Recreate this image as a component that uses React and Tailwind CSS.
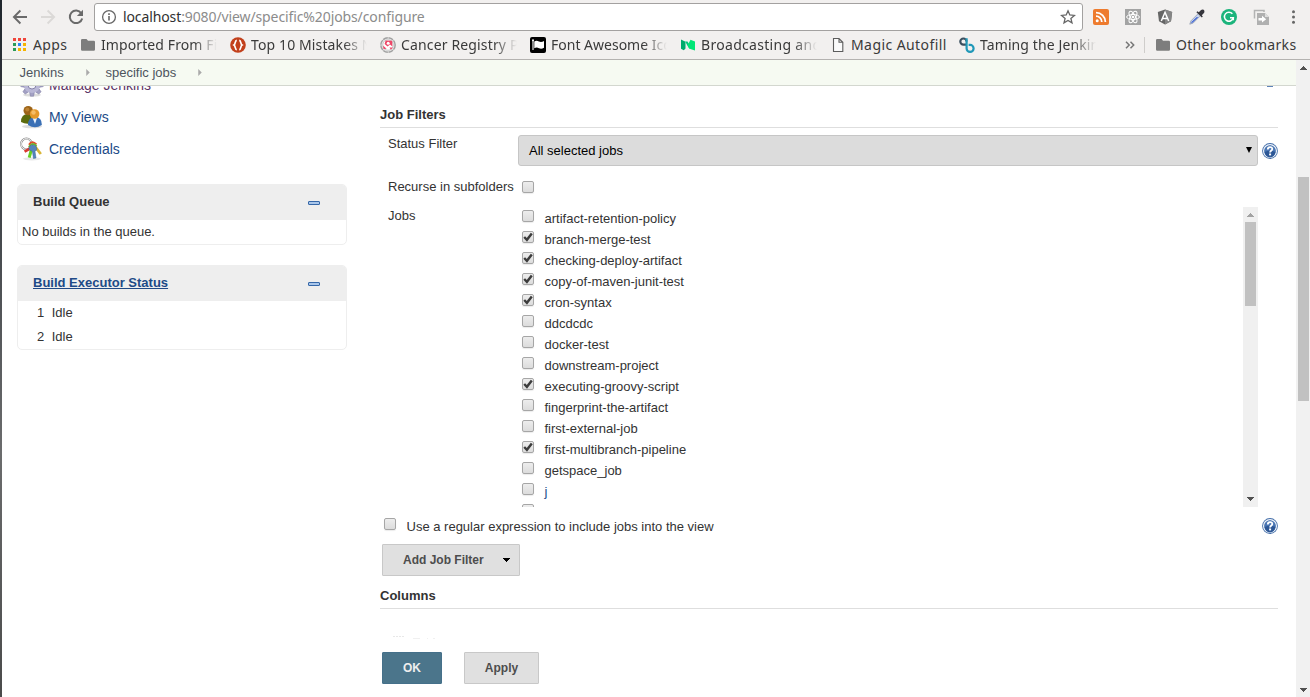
import React from "react";

const jobs = [
  ["artifact-retention-policy", false],
  ["branch-merge-test", true],
  ["checking-deploy-artifact", true],
  ["copy-of-maven-junit-test", true],
  ["cron-syntax", true],
  ["ddcdcdc", false],
  ["docker-test", false],
  ["downstream-project", false],
  ["executing-groovy-script", true],
  ["fingerprint-the-artifact", false],
  ["first-external-job", false],
  ["first-multibranch-pipeline", true],
  ["getspace_job", false],
  ["j", false],
  ["", false],
];

function Checkbox({ checked }) {
  return (
    <span className="block h-3 w-3 shrink-0 rounded-[2px] border border-[#a6a6a6] bg-linear-to-b from-[#ededed] to-[#dcdcdc] shadow-[0_1px_1px_rgba(0,0,0,0.08)]">
      {checked && (
        <svg viewBox="0 0 10 10" className="block h-[10px] w-[10px]">
          <path d="M1.2 5 L3.9 7.8 L8.8 1.4" fill="none" stroke="#3c3c3c" strokeWidth="2.4" />
        </svg>
      )}
    </span>
  );
}

function HelpIcon() {
  return (
    <svg viewBox="0 0 16 16" className="block h-4 w-4 shrink-0">
      <circle cx="8" cy="8" r="7.9" fill="#456fa9" />
      <circle cx="8" cy="8" r="6.4" fill="none" stroke="#eef3fa" strokeWidth="1.3" />
      <circle cx="8" cy="8" r="5.5" fill="#4a76b4" />
      <path d="M2.6 9 A5.4 5.4 0 0 0 13.4 9 Q8 6.5 2.6 9Z" fill="#2c5796" />
      <path d="M5.8 6.4 C5.8 3.4 10.3 3.4 10.3 6 C10.3 7.6 8.1 7.4 8.1 9.6" fill="none" stroke="#fff" strokeWidth="1.8" />
      <rect x="7.1" y="10.5" width="2" height="1.9" fill="#fff" />
    </svg>
  );
}

function Arrow({ up, color = "#505050", className }) {
  return (
    <svg viewBox="0 0 7 4" className={"block h-1 w-[7px] " + (className || "")} shapeRendering="crispEdges">
      <path d={up ? "M3.5 0 L7 4 H0Z" : "M0 0 H7 L3.5 4Z"} fill={color} />
    </svg>
  );
}

function FolderIcon() {
  return (
    <svg viewBox="0 0 16 16" className="h-4 w-4">
      <path d="M2.2 2 H6.5 L8 3.8 H13.8 Q15 3.8 15 5 V12.6 Q15 13.8 13.8 13.8 H2.2 Q1 13.8 1 12.6 V3.2 Q1 2 2.2 2Z" fill="#7d7d7d" />
    </svg>
  );
}

function AppsIcon() {
  const c = ["#f0453a", "#f0453a", "#f0453a", "#2a9a57", "#2b83f6", "#f5b400", "#2a9a57", "#f5b400", "#f5b400"];
  return (
    <svg viewBox="0 0 16 16" className="h-4 w-4" shapeRendering="crispEdges">
      {c.map((f, i) => (
        <rect key={i} x={1 + (i % 3) * 5} y={1 + Math.floor(i / 3) * 5} width="3" height="3" fill={f} />
      ))}
    </svg>
  );
}

function BracesIcon() {
  return (
    <svg viewBox="0 0 16 16" className="h-4 w-4">
      <circle cx="8" cy="8" r="7.8" fill="#c2401c" />
      <path d="M6.8 3.4 C4.7 3.4 5.7 7 4 8 C5.7 9 4.7 12.6 6.8 12.6 M9.2 3.4 C11.3 3.4 10.3 7 12 8 C10.3 9 11.3 12.6 9.2 12.6" fill="none" stroke="#fff" strokeWidth="1.7" />
    </svg>
  );
}

function RegistryIcon() {
  return (
    <svg viewBox="0 0 16 16" className="h-4 w-4">
      <circle cx="8" cy="8" r="7.2" fill="#e2e2e2" stroke="#a0a0a0" strokeWidth="1.4" strokeDasharray="5 .7" />
      <circle cx="8" cy="8" r="5.2" fill="#fff" stroke="#c4c4c4" strokeWidth=".8" />
      <path d="M5.6 3.4 L12.2 3.8 L12.4 9.4 L10 7.6 L7.6 9.6 L4.6 7Z" fill="#ee4667" />
      <circle cx="8.2" cy="6.3" r="1.5" fill="#fff" />
      <path d="M3 8.4 L6.6 11.8 L3.6 12Z M9.4 10.6 L12.8 10.6 L11 12.8Z" fill="#ee4667" />
    </svg>
  );
}

function FlagIcon() {
  return (
    <svg viewBox="0 0 16 16" className="h-4 w-4">
      <rect width="16" height="16" rx="2" fill="#000" />
      <path d="M3 3.2 V13" stroke="#fff" strokeWidth="1.1" />
      <circle cx="3" cy="3.2" r="1" fill="#fff" />
      <path d="M4.3 4.5 Q6.5 3.2 9 4.5 Q11.3 5.5 14 4 V10.8 Q11.3 12.3 9 11.2 Q6.5 10 4.3 11.3Z" fill="#fff" />
    </svg>
  );
}

function RibbonIcon() {
  return (
    <svg viewBox="0 0 16 16" className="h-4 w-4">
      <path d="M1 2.5 L5.5 4.8 V11.5 L3.8 13.2 L1 11.8Z" fill="#00ab6c" />
      <path d="M5.2 4.6 L9.2 11.8 L11 10 L7.5 4.5Z" fill="#00c87a" />
      <path d="M10.5 2.8 L15 4.5 V13.5 L9.5 11.8 L7.6 8.2Z" fill="#00e676" />
    </svg>
  );
}

function PageIcon() {
  return (
    <svg viewBox="0 0 16 16" className="h-4 w-4">
      <path d="M3.5 1.5 H9 L12.8 5.3 V14.5 H3.5Z M9 1.5 V5.3 H12.8" fill="#fafafa" stroke="#5c5c5c" strokeWidth="1.1" />
    </svg>
  );
}

function LoopIcon() {
  return (
    <svg viewBox="0 0 16 16" className="h-4 w-4" fill="none" strokeWidth="2.2">
      <path d="M8 7.7 H4.4 A3.1 3.1 0 1 1 7.5 4.6" stroke="#3b4f5f" />
      <path d="M7.6 1.2 V11.4 A3.5 3.5 0 1 0 11.1 7.9 H9.6" stroke="#2098b8" />
    </svg>
  );
}

const bookmarks = [
  { text: "Apps", icon: AppsIcon, box: "w-[68px]", label: "tracking-[0.4px]" },
  { text: "Imported From Fire", icon: FolderIcon, box: "w-[150px]", fade: true, label: "tracking-[0.1px]" },
  { text: "Top 10 Mistakes No", icon: BracesIcon, box: "w-[150px]", fade: true, label: "tracking-[0.12px]" },
  { text: "Cancer Registry Pr", icon: RegistryIcon, box: "w-[150px]", fade: true, label: "tracking-[0.15px]" },
  { text: "Font Awesome Icon", icon: FlagIcon, box: "w-[150px]", fade: true, label: "" },
  { text: "Broadcasting and", icon: RibbonIcon, box: "w-[150px]", fade: true, label: "tracking-[0.3px]" },
  { text: "Magic Autofill", icon: PageIcon, box: "w-[129px]", label: "tracking-[0.42px]" },
  { text: "Taming the Jenkins", icon: LoopIcon, box: "w-[137px]", fade: true, label: "tracking-[0.1px]" },
];

function Bookmark({ item }) {
  const Icon = item.icon;
  return (
    <div className={"flex shrink-0 items-center gap-[5px] " + item.box}>
      <span className="shrink-0"><Icon /></span>
      <span
        className={
          "-mt-px block overflow-hidden whitespace-nowrap " + item.label +
          (item.fade ? " w-[116px] mask-r-from-80% mask-r-to-100%" : "")
        }
      >
        {item.text}
      </span>
    </div>
  );
}

function Extensions() {
  return (
    <div className="flex items-center gap-4">
      <svg viewBox="0 0 16 16" className="h-4 w-4">
        <rect width="16" height="16" rx="2" fill="#ee7b2e" />
        <circle cx="4.2" cy="11.8" r="1.5" fill="#fff" />
        <path d="M3 7.2 A5.8 5.8 0 0 1 8.8 13 M3 3.6 A9.4 9.4 0 0 1 12.4 13" fill="none" stroke="#fff" strokeWidth="1.8" />
      </svg>
      <svg viewBox="0 0 16 16" className="h-4 w-4">
        <rect width="16" height="16" fill="#a3a3a3" />
        <g fill="none" stroke="#fff" strokeWidth="1">
          <ellipse cx="8" cy="8" rx="6.4" ry="2.5" />
          <ellipse cx="8" cy="8" rx="6.4" ry="2.5" transform="rotate(60 8 8)" />
          <ellipse cx="8" cy="8" rx="6.4" ry="2.5" transform="rotate(120 8 8)" />
        </g>
        <circle cx="8" cy="8" r="1.3" fill="#fff" />
      </svg>
      <svg viewBox="0 0 16 16" className="h-4 w-4">
        <path d="M8 .6 L15.2 3 L14 12.2 L8 15.6 L2 12.2 L.8 3Z" fill="#666" />
        <path d="M8 .6 L15.2 3 L14 12.2 L8 15.6Z" fill="#858585" />
        <path d="M4.3 12 L8 3.3 L11.7 12 M5.7 9.4 H10.3" fill="none" stroke="#fff" strokeWidth="1.5" />
      </svg>
      <svg viewBox="0 0 16 16" className="h-4 w-4">
        <path d="M9.4 4.4 L2 11.8 L.8 15.2 L4.2 14 L11.6 6.6Z" fill="#c9d5ee" stroke="#8490a8" strokeWidth=".7" />
        <path d="M7.5 8.2 L2.6 13 L2 14.2 L3.6 13.6 L9.4 8Z" fill="#3359d0" />
        <path d="M7.4 3.2 L12.8 8.6 L13.8 7.4 L12.8 6.2 L15.2 3.8 Q16 1.9 14.7 .8 Q13.2 0 11.8 1.2 L9.8 3.2 L8.5 2.2Z" fill="#37363d" />
      </svg>
      <svg viewBox="0 0 16 16" className="h-4 w-4">
        <circle cx="8" cy="8" r="8" fill="#1cb47c" />
        <path d="M11.4 4.8 A4.5 4.5 0 1 0 12.3 8.8 H9 M12.3 8.3 V11.2" fill="none" stroke="#fff" strokeWidth="1.5" />
      </svg>
      <svg viewBox="0 0 16 16" className="h-4 w-4">
        <path d="M1.5 9.5 V1.5 H11 V3" fill="none" stroke="#b3b3b3" strokeWidth="1.5" />
        <path d="M4 4 H12 L16 8 V16 H4Z" fill="#b0b0b0" />
        <path d="M12 4 V8 H16" fill="#dedede" />
        <path d="M5.5 9 H9 V6.8 L13.2 10.2 L9 13.6 V11.4 H5.5Z" fill="#fff" />
      </svg>
      <svg viewBox="0 0 16 16" className="h-4 w-4" fill="#666">
        <circle cx="8.5" cy="2.8" r="1.5" />
        <circle cx="8.5" cy="8" r="1.5" />
        <circle cx="8.5" cy="13.2" r="1.5" />
      </svg>
    </div>
  );
}

function BrowserChrome() {
  return (
    <header className="flex h-[60px] shrink-0 flex-col border-b border-[#b4b2b0] bg-[#f2f0ef] font-['Noto_Sans',sans-serif]">
      <div className="flex h-[31px] items-start pt-[3px]">
        <div className="flex h-7 w-[92px] items-center gap-3 pl-[10px]">
          <svg viewBox="0 0 16 16" className="h-4 w-4" fill="none" stroke="#6a6a6a" strokeWidth="1.9">
            <path d="M15 8 H2.2 M8.4 1.5 L1.9 8 L8.4 14.5" />
          </svg>
          <svg viewBox="0 0 16 16" className="h-4 w-4" fill="none" stroke="#dbd9d7" strokeWidth="1.9">
            <path d="M1 8 H13.8 M7.6 1.5 L14.1 8 L7.6 14.5" />
          </svg>
          <svg viewBox="0 0 16 16" className="h-4 w-4">
            <path d="M13.3 4.2 A6.3 6.3 0 1 0 14.2 9.4" fill="none" stroke="#6a6a6a" strokeWidth="2" />
            <path d="M15 .8 V6.9 H8.9Z" fill="#6a6a6a" />
          </svg>
        </div>
        <div className="flex h-7 w-[989px] items-center rounded-[3px] border border-[#a3a1a0] bg-white pr-[6px] pl-[6px]">
          <svg viewBox="0 0 16 16" className="h-4 w-4" fill="none" stroke="#666">
            <circle cx="8" cy="8" r="6.4" strokeWidth="1.3" />
            <path d="M8 7.1 V11.6 M8 4.3 V5.9" strokeWidth="1.6" />
          </svg>
          <span className="-mt-px ml-[6px] grow text-[14px] tracking-[-0.11px] whitespace-nowrap text-[#8c8c8c]">
            <span className="text-[#303030]">localhost</span>:9080/view/specific%20jobs/configure
          </span>
          <svg viewBox="0 0 16 16" className="h-4 w-4">
            <path d="M8 1.8 L9.8 6 L14.4 6.4 L10.9 9.4 L12 13.9 L8 11.5 L4 13.9 L5.1 9.4 L1.6 6.4 L6.2 6Z" fill="none" stroke="#666" strokeWidth="1.3" />
          </svg>
        </div>
        <div className="flex h-7 items-center pl-[10px]">
          <Extensions />
        </div>
      </div>
      <div className="flex h-7 items-center pl-[10px] text-[14px] text-[#3a3a3a]">
        {bookmarks.map((b) => (
          <Bookmark key={b.text} item={b} />
        ))}
        <div className="flex w-[48px] shrink-0 justify-end">
          <svg viewBox="0 0 10 8" className="mr-[9px] h-2 w-[10px]" fill="none" stroke="#777" strokeWidth="1.5">
            <path d="M1 .8 L4.2 4 L1 7.2 M5.5 .8 L8.7 4 L5.5 7.2" />
          </svg>
        </div>
        <span className="mr-[10px] h-4 w-px bg-[#cfcdcb]" />
        <FolderIcon />
        <span className="-mt-px ml-[5px] tracking-[0.3px] whitespace-nowrap">Other bookmarks</span>
      </div>
    </header>
  );
}

function GearIcon() {
  return (
    <svg viewBox="0 0 24 24" className="h-6 w-6">
      <ellipse cx="12" cy="22" rx="9" ry="1.6" fill="#ddd" />
      <g fill="#a3a1c4" stroke="#76749c" strokeWidth=".5">
        {[0, 45, 90, 135, 180, 225, 270, 315].map((a) => (
          <path key={a} d="M9.6 5 L10.4 .8 H13.6 L14.4 5Z" transform={"rotate(" + a + " 12 12)"} />
        ))}
      </g>
      <circle cx="12" cy="12" r="8" fill="#b9b7d6" />
      <circle cx="12" cy="12" r="4" fill="#f4f4fa" stroke="#8583a8" />
    </svg>
  );
}

function PeopleIcon() {
  return (
    <svg viewBox="0 0 24 24" className="h-6 w-6">
      <ellipse cx="12" cy="21.5" rx="10" ry="1.8" fill="#ddd" />
      <path d="M1 17 Q1 9 8 9 Q14 9 13 18 Q6 20 1 17Z" fill="#5c6b0c" />
      <circle cx="8.2" cy="5.6" r="4.7" fill="#9c6418" />
      <circle cx="7.3" cy="4.4" r="2" fill="#bd8232" />
      <path d="M8 20 Q8 12 15 12 Q22 12 21.8 20 Q15 24.5 8 20Z" fill="#3b70b5" />
      <path d="M12.7 13 L15 19 L17 13Z" fill="#e9f1fb" />
      <circle cx="14.6" cy="9" r="4.8" fill="#e4992b" />
      <circle cx="13.5" cy="7.5" r="2.2" fill="#f5bd66" />
    </svg>
  );
}

function KeysIcon() {
  return (
    <svg viewBox="0 0 24 24" className="h-6 w-6">
      <ellipse cx="12" cy="21.8" rx="9" ry="1.6" fill="#e8e8e8" />
      <circle cx="6.4" cy="7" r="5.4" fill="none" stroke="#8d8d8d" strokeWidth="2" />
      <circle cx="6.4" cy="7" r="5.4" fill="none" stroke="#f2f2f2" strokeWidth="1" />
      <path d="M15 9.5 L20.8 17" stroke="#d9b536" strokeWidth="2.8" />
      <path d="M10 11.5 L4.6 14.6" stroke="#d93a32" strokeWidth="2.8" />
      <path d="M11.6 12 L9.2 20.6" stroke="#67cf22" strokeWidth="3" />
      <path d="M9 7.8 Q12 2.8 16.4 7.4" fill="none" stroke="#e24d2c" strokeWidth="2" />
      <path d="M8.8 10 Q12 4.6 16.6 9" fill="none" stroke="#6fba32" strokeWidth="1.8" />
      <path d="M9 12.5 Q9 7.6 13 7.9 Q17.4 8.5 16.6 13 L15 14.6 L16 21 L13.5 21.5 L12.4 14.4Z" fill="#5584bb" stroke="#3a6494" strokeWidth=".5" />
    </svg>
  );
}

function MinusIcon() {
  return <span className="block h-[4px] w-3 rounded-[1px] border border-[#3567a8] bg-[#a9c6ea]" />;
}

function Sidebar() {
  return (
    <aside className="flex w-[345px] shrink-0 flex-col pl-[15px] text-[13px] text-[#333]">
      <nav className="-mt-[17px] flex flex-col text-[14px] text-[#204a87]">
        <a className="flex h-8 items-center gap-[5px] pl-[3px] text-[#5c3566]"><GearIcon /><span>Manage Jenkins</span></a>
        <a className="flex h-8 items-center gap-[5px] pl-[3px]"><PeopleIcon /><span>My Views</span></a>
        <a className="flex h-8 items-center gap-[5px] pl-[3px]"><KeysIcon /><span>Credentials</span></a>
      </nav>
      <section className="mt-[19px] h-[61px] overflow-hidden rounded-[5px] border border-[#eee]">
        <div className="flex h-[35px] items-center justify-between bg-[#eee] pr-[26px] pb-0.5 pl-[15px] font-bold">
          <span>Build Queue</span>
          <span className="mt-[3px]"><MinusIcon /></span>
        </div>
        <div className="flex h-6 items-center pl-1">No builds in the queue.</div>
      </section>
      <section className="mt-5 h-[85px] overflow-hidden rounded-[5px] border border-[#eee]">
        <div className="flex h-[35px] items-center justify-between bg-[#eee] pr-[26px] pb-0.5 pl-[15px] font-bold">
          <span className="text-[#204a87] underline">Build Executor Status</span>
          <span className="mt-[3px]"><MinusIcon /></span>
        </div>
        <div className="flex h-6 items-center gap-[7.5px] pl-[19px]"><span>1</span><span>Idle</span></div>
        <div className="flex h-6 items-center gap-[7.5px] pl-[19px]"><span>2</span><span>Idle</span></div>
      </section>
    </aside>
  );
}

function JobList() {
  return (
    <div className="flex h-[300px] w-[740px] overflow-hidden">
      <div className="flex grow flex-col">
        {jobs.map(([name, checked], i) => (
          <label key={i} className="flex h-[21px] shrink-0 items-start pl-1">
            <span className="mt-[3px]"><Checkbox checked={checked} /></span>
            <span className={"ml-[10.5px] leading-[23px]" + (name === "j" ? " text-[#204a87]" : "")}>{name}</span>
          </label>
        ))}
      </div>
      <div className="flex w-[15px] flex-col items-center bg-[#f0f0f0]">
        <Arrow up color="#a3a3a3" className="mt-1.5 mb-[5px]" />
        <span className="h-[84px] w-[11px] bg-[#c1c1c1]" />
        <Arrow className="mt-auto mb-1.5" />
      </div>
    </div>
  );
}

function ConfigForm() {
  return (
    <main className="ml-[33px] flex w-[898px] shrink-0 flex-col text-[13px] text-[#333]">
      <div className="flex h-px justify-end pr-[5px]"><span className="h-px w-1.5 bg-[#5f84b8]" /></div>
      <h2 className="flex h-[41px] items-center border-b border-[#dedede] pt-[15px] font-bold">Job Filters</h2>
      <div className="flex h-[39px] pt-[7px]">
        <span className="w-[138px] pl-2 leading-[18px]">Status Filter</span>
        <div className="flex h-[31px] w-[740px] items-center justify-between rounded-[3px] border border-[#c6c6c6] bg-[#dcdcdc] pr-[5px] pl-[10px] text-black">
          <span>All selected jobs</span>
          <svg viewBox="0 0 6 6" className="mb-px h-1.5 w-1.5"><path d="M0 0 H6 L3 6Z" fill="#000" /></svg>
        </div>
        <span className="mt-2 ml-1"><HelpIcon /></span>
      </div>
      <div className="flex h-[40px] pt-3">
        <span className="w-[142px] pl-2 leading-[15px] whitespace-nowrap">Recurse in subfolders</span>
        <span className="mt-[2px]"><Checkbox /></span>
      </div>
      <div className="flex h-[300px]">
        <span className="w-[138px] pl-2 leading-[17px]">Jobs</span>
        <JobList />
      </div>
      <div className="flex h-[37px] pt-[11px] pl-1">
        <Checkbox />
        <span className="ml-[10.5px] grow leading-[17px]">Use a regular expression to include jobs into the view</span>
        <HelpIcon />
      </div>
      <button className="ml-[2px] flex h-8 w-[138px] shrink-0 items-center justify-between rounded-[1px] border border-[#c8c8c8] bg-[#e0e0e0] pr-[9px] pl-[20px] text-[12px] font-bold text-[#4d4d4d]">
        <span>Add Job Filter</span>
        <Arrow color="#000" />
      </button>
      <h2 className="flex h-[33px] items-center border-b border-[#dedede] pt-[8px] font-bold">Columns</h2>
      <svg viewBox="0 0 898 43" className="block h-[43px] w-[898px]">
        <path d="M13 27.5 H24" stroke="#e8e8e8" strokeDasharray="2 1" />
        <path d="M33 29.5 H40 M47 29.5 H48 M53 29.5 H55" stroke="#f0f0f0" />
      </svg>
      <div className="flex gap-[22px] pl-[2px] text-[12px] font-bold">
        <button className="h-8 w-[60px] rounded-[1px] border border-[#45708a] bg-[#4b758b] text-[#eee]">OK</button>
        <button className="h-8 w-[75px] rounded-[1px] border border-[#c8c8c8] bg-[#e0e0e0] text-[#4d4d4d]">Apply</button>
      </div>
    </main>
  );
}

function Crumb({ children, className }) {
  return (
    <span className={"flex items-center justify-between " + className}>
      {children}
      <svg viewBox="0 0 4 8" className="h-[7px] w-1"><path d="M0 0 L4 4 L0 8Z" fill="#aaa" /></svg>
    </span>
  );
}

export default function App() {
  return (
    <div className="flex h-[697px] w-[1310px] overflow-hidden bg-white font-['Liberation_Sans',Arial,sans-serif]">
      <div className="w-[2px] shrink-0 bg-linear-to-b from-[#20262d] via-[#6b6c6d] via-65% to-[#4a4b4b]" />
      <div className="flex w-[1308px] flex-col">
        <BrowserChrome />
        <div className="flex h-[637px]">
          <div className="flex w-[1294px] flex-col">
            <div className="flex h-[26px] shrink-0 items-center border-b border-[#d3d7cf] bg-[#f6faf2] pl-[17.6px] text-[13px] text-[#4d545d]">
              <Crumb className="w-[70.4px]">Jenkins</Crumb>
              <Crumb className="ml-[15.5px] w-[96.5px]">specific jobs</Crumb>
            </div>
            <div className="flex h-[611px] overflow-hidden">
              <Sidebar />
              <ConfigForm />
            </div>
          </div>
          <div className="flex w-[14px] flex-col items-center bg-[#f1f1f1]">
            <Arrow up className="mt-1.5 mb-[107px] ml-px" />
            <span className="ml-px h-[224px] w-[11px] bg-[#c1c1c1]" />
            <Arrow className="mt-auto mb-[5px] ml-px" />
          </div>
        </div>
      </div>
    </div>
  );
}
